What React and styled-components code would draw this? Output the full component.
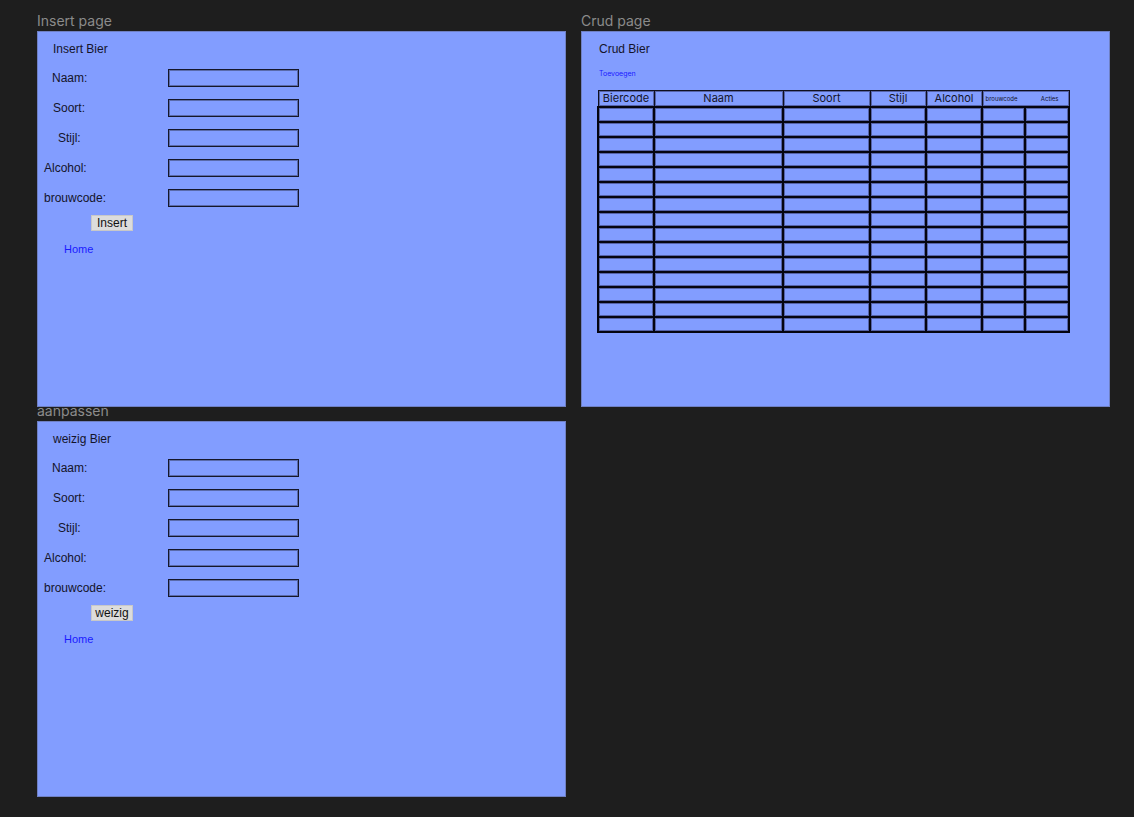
import React from 'react';
import styled, { createGlobalStyle } from "styled-components"

const GlobalStyle = createGlobalStyle`
  body {
    margin: 0;
    background: #1e1e1e;
  }
`

const fields = [
  { label: 'Naam:', indent: 8 },
  { label: 'Soort:', indent: 9 },
  { label: 'Stijl:', indent: 14 },
  { label: 'Alcohol:', indent: 0 },
  { label: 'brouwcode:', indent: 0 },
];

const columns = [
  { title: 'Biercode', width: 56 },
  { title: 'Naam', width: 129 },
  { title: 'Soort', width: 87 },
  { title: 'Stijl', width: 56 },
  { title: 'Alcohol', width: 56 },
  { title: 'brouwcode', width: 43 },
  { title: 'Acties', width: 44 },
];

const rows = Array.from({ length: 15 }, (_, i) => i);

const BierForm = ({ title, button }) => (
  <>
    <FormTitle>{title}</FormTitle>
    <FormGrid>
      {fields.map((f) => (
        <React.Fragment key={f.label}>
          <FieldLabel $indent={f.indent}>{f.label}</FieldLabel>
          <FieldInput />
        </React.Fragment>
      ))}
    </FormGrid>
    <SubmitButton>{button}</SubmitButton>
    <HomeLink href="#">Home</HomeLink>
  </>
);

const CrudPage = () => (
  <>
    <CrudTitle>Crud Bier</CrudTitle>
    <AddLink href="#">Toevoegen</AddLink>
    <BierTable>
      <colgroup>
        {columns.map((c) => <col key={c.title} style={{ width: c.width }} />)}
      </colgroup>
      <thead>
        <tr>
          {columns.slice(0, 5).map((c) => <Th key={c.title}>{c.title}</Th>)}
          <Th colSpan={2}>
            <SmallHead>
              <span>brouwcode</span>
              <span>Acties</span>
            </SmallHead>
          </Th>
        </tr>
      </thead>
      <tbody>
        {rows.map((r) => (
          <tr key={r}>
            {columns.map((c) => <Td key={c.title} />)}
          </tr>
        ))}
      </tbody>
    </BierTable>
  </>
);

const App = () => {
  return (
    <>
      <GlobalStyle />
      <Canvas>
        <FrameBlock>
          <FrameName>Insert page</FrameName>
          <Frame>
            <BierForm title="Insert Bier" button="Insert" />
          </Frame>
        </FrameBlock>
        <FrameBlock>
          <FrameName>Crud page</FrameName>
          <Frame>
            <CrudPage />
          </Frame>
        </FrameBlock>
        <FrameBlock $overlap>
          <FrameName>aanpassen</FrameName>
          <Frame>
            <BierForm title="weizig Bier" button="weizig" />
          </Frame>
        </FrameBlock>
      </Canvas>
    </>
  );
};

export default App;


const Canvas = styled.div`
    display: grid;
    grid-template-columns: 529px 529px;
    column-gap: 15px;
    padding: 13px 0 0 37px;
    font-family: "Liberation Sans", Arial, sans-serif;
`

const FrameBlock = styled.div`
    display: flex;
    flex-direction: column;
    margin-top: ${(p) => (p.$overlap ? '-4px' : '0')};
`

const FrameName = styled.div`
    font-family: Inter, "Noto Sans", sans-serif;
    font-size: 14px;
    line-height: 16px;
    height: 16px;
    margin-bottom: 2px;
    color: #8b8b8b;
    white-space: nowrap;
`

const Frame = styled.div`
    position: relative;
    z-index: 1;
    height: 376px;
    box-sizing: border-box;
    background: #829dff;
    border: 1px solid #6f80c4;
    display: flex;
    flex-direction: column;
    align-items: flex-start;
`

const FormTitle = styled.div`
    font-size: 12px;
    line-height: 14px;
    color: #14142a;
    margin: 10px 0 0 15px;
`

const FormGrid = styled.div`
    display: grid;
    grid-template-columns: 124px 131px;
    grid-auto-rows: 18px;
    row-gap: 12px;
    align-items: center;
    margin: 13px 0 0 6px;
`

const FieldLabel = styled.label`
    font-size: 12px;
    color: #14142a;
    padding-left: ${(p) => p.$indent}px;
    white-space: nowrap;
`

const FieldInput = styled.input`
    box-sizing: border-box;
    width: 131px;
    height: 18px;
    margin: 0;
    background: transparent;
    border: 1.5px solid #15172b;
    box-shadow: inset 0 0 0 1px #5a6aaa;
    outline: none;
`

const SubmitButton = styled.button`
    margin: 8px 0 0 53px;
    width: 42px;
    height: 16px;
    padding: 0;
    border: 1px solid #c8c8c8;
    background: #dcdcdc;
    font-family: "Liberation Sans", Arial, sans-serif;
    font-size: 12px;
    line-height: 14px;
    color: #111;
`

const HomeLink = styled.a`
    margin: 11px 0 0 26px;
    font-size: 11px;
    line-height: 14px;
    color: #1a1aff;
    text-decoration: none;
`

const CrudTitle = styled.div`
    font-size: 12px;
    line-height: 14px;
    color: #14142a;
    margin: 10px 0 0 17px;
`

const AddLink = styled.a`
    font-family: Inter, "Noto Sans", sans-serif;
    font-size: 7px;
    line-height: 10px;
    color: #1a1aff;
    text-decoration: none;
    margin: 13px 0 0 17px;
`

const BierTable = styled.table`
    margin: 11px 0 0 15px;
    width: 471px;
    table-layout: fixed;
    border-collapse: collapse;
    border: 1.5px solid #101020;
    font-family: Inter, "Noto Sans", sans-serif;
`

const Th = styled.th`
    height: 15px;
    padding: 0;
    border: 1.5px solid #101020;
    box-shadow: inset 0 0 0 1px #5563a8;
    font-weight: 400;
    font-size: 11px;
    line-height: 13px;
    color: #14142a;
    text-align: center;
`

const SmallHead = styled.div`
    display: flex;
    justify-content: space-between;
    padding: 0 10px 0 3px;
    font-size: 6px;
    line-height: 13px;
`

const Td = styled.td`
    height: 13px;
    padding: 0;
    border: 2px solid #050510;
    box-shadow: inset 0 0 0 1px #5563a8;
`
